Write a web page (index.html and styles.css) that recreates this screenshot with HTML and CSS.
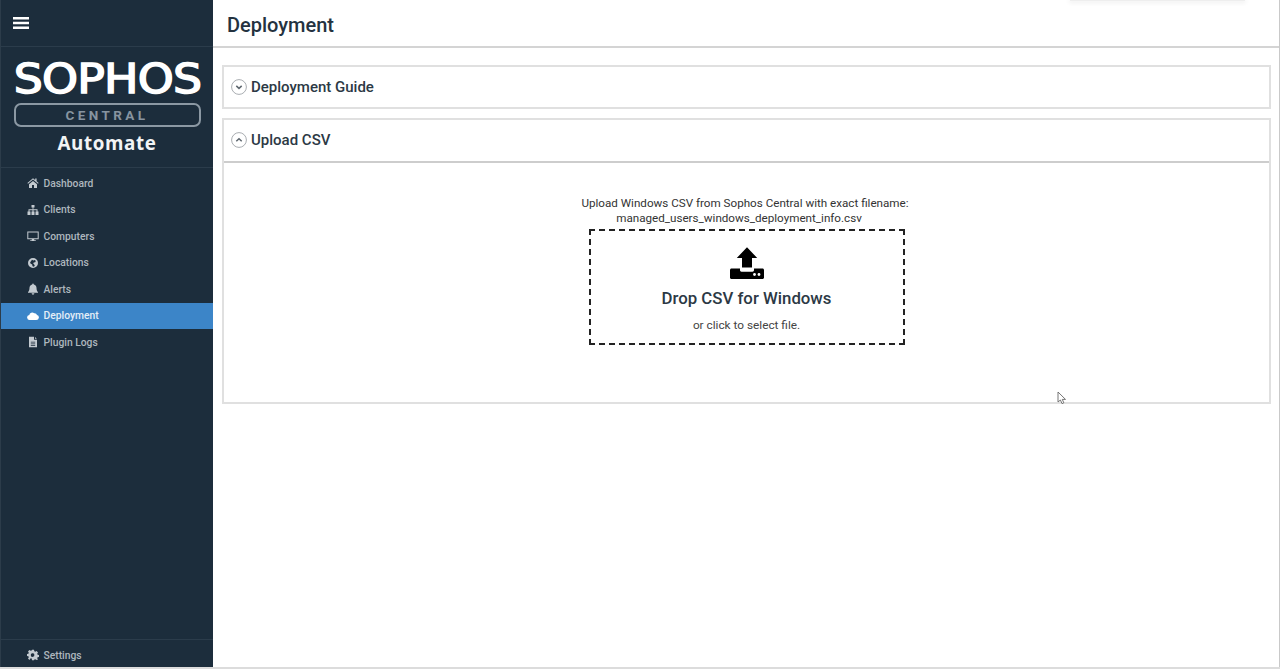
FILE: index.html
```html
<!DOCTYPE html>
<html lang="en">
<head>
<meta charset="utf-8">
<title>Deployment</title>
<link rel="stylesheet" href="styles.css">
</head>
<body>
<div class="app">
  <aside class="sidebar">
    <div class="side-top">
      <svg class="burger" viewBox="0 0 16 14" width="16" height="14"><path d="M0 1h16v2.400H0zM0 5.800h16v2.400H0zM0 10.600h16V13H0z" fill="#fff"/></svg>
    </div>
    <div class="brand">
      <div class="sophos">SOPHOS</div>
      <div class="central">CENTRAL</div>
      <div class="automate">Automate</div>
    </div>
    <nav class="nav">
      <a class="nav-item"><svg class="ico" viewBox="0 0 12 12"><path d="M6 1.200.4 6l.6.7L6 2.600l5 4.100.6-.7-2-1.700V1.600H8.200v1.500zM2 7.200V11h3V8h2v3h3V7.200L6 3.900z"/></svg>Dashboard</a>
      <a class="nav-item"><svg class="ico" viewBox="0 0 12 12"><path d="M4.500 1h3v2.600H6.400v1.600h4.100v2.400H11.500V11h-3V7.600h1V6.200h-3v1.400h1V11h-3V7.600h1V6.200h-3v1.400h1V11h-3V7.600h1V5.200h4.100V3.600H4.500z"/></svg>Clients</a>
      <a class="nav-item"><svg class="ico" viewBox="0 0 12 12"><path d="M.3 1.500h11.400v7.700H7.200v1h1.600V11H3.200v-.8h1.600v-1H.3zm1 1v5.700h9.400V2.500z" fill-rule="evenodd"/></svg>Computers</a>
      <a class="nav-item"><svg class="ico" viewBox="0 0 12 12"><path d="M6 1a5 5 0 1 0 0 10A5 5 0 0 0 6 1zm-1 1.800 1.500.6L7.800 3l1 1-.6 1.200-1.400.2-.6 1.200 1 .8.600 1.400-1 1-1.300-.6-.3-1.600-1.500-.9-.6-1.300 1-1.500z" fill-rule="evenodd"/></svg>Locations</a>
      <a class="nav-item"><svg class="ico" viewBox="0 0 12 12"><path d="M6 .6a.8.800 0 0 1 .8.800c1.700.3 2.700 1.700 2.700 3.300 0 2.500.7 3.500 1.500 4.300v.7h-10V9C1.800 8.200 2.500 7.200 2.500 4.700c0-1.600 1-3 2.700-3.300A.8.800 0 0 1 6 .6zM4.600 10.300h2.800a1.400 1.400 0 0 1-2.800 0z"/></svg>Alerts</a>
      <a class="nav-item active"><svg class="ico" viewBox="0 0 12 12"><path d="M3 10h6.300A2.600 2.600 0 0 0 10 4.900 2.500 2.500 0 0 0 7.200 3.300 3 3 0 0 0 2.300 5 2.500 2.500 0 0 0 3 10z"/></svg>Deployment</a>
      <a class="nav-item"><svg class="ico" viewBox="0 0 12 12"><path d="M2 .7h5v3h3v7.600H2zM8 .9 9.800 2.800H8zM3.800 5.800v.8h4.400v-.8zm0 1.600v.8h4.400v-.8zm0 1.600v.8h4.400V9z" fill-rule="evenodd"/></svg>Plugin Logs</a>
    </nav>
    <div class="side-foot">
      <a class="nav-item"><svg class="ico" viewBox="0 0 12 12"><path d="M5 .8h2l.3 1.500 1 .4L9.600 2 11 3.400l-.8 1.300.4 1 1.500.3v2l-1.500.3-.4 1 .8 1.300L9.600 11l-1.300-.800-1 .4L7 11.200H5l-.3-1.600-1-.4L2.400 11 1 9.600l.8-1.300-.4-1L-.1 7V5l1.500-.3.4-1L1 2.400 2.400 1l1.300.8 1-.4zM6 4.300a1.800 1.800 0 1 0 0 3.500 1.800 1.800 0 0 0 0-3.500z" fill-rule="evenodd"/></svg>Settings</a>
    </div>
  </aside>
  <main class="main">
    <header class="page-head"><h1 class="page-title">Deployment</h1></header>
    <div class="content">
      <section class="panel">
        <div class="panel-head">
          <svg class="chev" viewBox="0 0 16 16"><circle cx="8" cy="8" r="7.400"/><path d="M5.300 6.900 8 9.400l2.700-2.500"/></svg>
          <h2 class="panel-title">Deployment Guide</h2>
        </div>
      </section>
      <section class="panel">
        <div class="panel-head open">
          <svg class="chev" viewBox="0 0 16 16"><circle cx="8" cy="8" r="7.400"/><path d="M5.300 9.200 8 6.700l2.700 2.500"/></svg>
          <h2 class="panel-title">Upload CSV</h2>
        </div>
        <div class="panel-body">
          <p class="hint">Upload Windows CSV from Sophos Central with exact filename:<span class="hint-file">managed_users_windows_deployment_info.csv</span></p>
          <div class="drop">
            <svg class="upload" viewBox="0 0 34 32" width="34" height="32"><path d="M17 .2 27.200 11H22v9.500H12V11H6.800z"/><path d="M1.500 21.500h8.500v1.500c0 1 .7 1.700 1.500 1.700h11c.8 0 1.500-.7 1.500-1.700v-1.500h8.500c.8 0 1.500.7 1.500 1.500v7.500c0 .8-.7 1.500-1.500 1.500h-31C.7 32 0 31.300 0 30.500V23c0-.8.700-1.500 1.500-1.500z"/><circle cx="24.500" cy="27.500" r="1.400" fill="#fff"/><circle cx="29" cy="27.500" r="1.400" fill="#fff"/></svg>
            <div class="drop-title">Drop CSV for Windows</div>
            <div class="drop-sub">or click to select file.</div>
          </div>
        </div>
      </section>
    </div>
  </main>
</div>
<div class="top-shadow"></div>
<svg class="cursor" viewBox="0 0 10 14" width="10" height="14"><path d="M1 1v10l2.400-2 1.600 3.600 1.800-.8L5.300 8.400H8.500z" fill="#fff" stroke="#666" stroke-width=".9"/></svg>
</body>
</html>
```
FILE: styles.css
```css
* { box-sizing: border-box; }
html, body { margin: 0; height: 100%; overflow: hidden; background: #fff; }
body { font-family: Roboto, "Liberation Sans", sans-serif; color: #2a3642; }
.app { display: flex; height: 667px; border-right: 1px solid #c9c9c9; box-shadow: 0 2px 0 #dcdcdc; }

.sidebar { width: 213px; flex: none; display: flex; flex-direction: column; background: #1c2d3c; border-left: 1px solid #2c3c4a; }
.side-top { height: 47px; flex: none; padding: 16px 0 0 12px; border-bottom: 1px solid #2b3c4b; }
.burger { display: block; }

.brand { height: 121px; flex: none; padding-top: 13px; border-bottom: 1px solid #2b3c4b; display: flex; flex-direction: column; align-items: center; }
.sophos { width: 187px; font-family: "DejaVu Sans", sans-serif; font-size: 40.500px; line-height: 38px; color: #fff; text-align: center; white-space: nowrap; letter-spacing: -.7px; -webkit-text-stroke: 1.500px #fff; transform: scaleX(1.13); }
.central { width: 187px; height: 24px; margin-top: 5px; border: 2px solid #8b98a3; border-radius: 7px; font-size: 13.500px; line-height: 20px; font-weight: 700; letter-spacing: 3.400px; text-align: center; color: #8794a0; }
.automate { margin-top: 3px; font-family: "Open Sans", sans-serif; font-size: 18.800px; line-height: 26px; font-weight: 700; letter-spacing: .6px; color: #f2f4f5; }

.nav { flex: 1; padding-top: 2px; }
.nav-item { display: flex; align-items: center; height: 26.500px; padding-left: 25.500px; font-size: 10.300px; font-weight: 500; color: #aeb7be; }
.nav-item.active { background: #3c85c8; color: #e4eef7; }
.nav-item.active .ico { fill: #fff; }
.ico { width: 12px; height: 12px; margin-right: 5px; flex: none; fill: #c3cad0; }
.side-foot { height: 28px; flex: none; padding-top: 2px; border-top: 1px solid #2b3c4b; }

.main { flex: 1; min-width: 0; }
.page-head { height: 48px; padding-left: 14px; border-bottom: 2px solid #d4d4d4; }
.page-title { margin: 0; font-size: 20px; line-height: 50px; font-weight: 500; color: #243240; }
.content { padding: 17px 8px 0 9px; }
.panel { border: 2px solid #e0e0e0; margin-bottom: 9px; }
.panel-head { display: flex; align-items: center; height: 40px; padding-left: 7px; }
.panel-head.open { height: 43px; padding-bottom: 1px; border-bottom: 2px solid #cdcdcd; }
.chev { width: 16px; height: 16px; margin-right: 4px; flex: none; fill: none; stroke: #a9adb1; stroke-width: 1; }
.chev path { stroke: #5d666e; stroke-width: 1.500; }
.panel-title { margin: 0; font-size: 15px; font-weight: 500; color: #2c3945; }
.panel-body { height: 239px; padding-top: 33px; display: flex; flex-direction: column; align-items: center; }
.hint { margin: 0 3px 0 0; font-size: 11.650px; line-height: 14.500px; text-align: center; color: #333; }
.hint-file { display: block; padding-right: 12px; }
.drop { width: 316px; height: 116px; margin-top: 4px; border: 2px dashed #222; display: flex; flex-direction: column; align-items: center; padding-top: 16px; }
.upload { display: block; fill: #000; }
.drop-title { margin-top: 9px; font-size: 16.800px; line-height: 20px; font-weight: 500; color: #2c3945; }
.drop-sub { margin-top: 10px; font-size: 11.800px; line-height: 14px; color: #444; }

.top-shadow { position: absolute; left: 1070px; top: 0; width: 175px; height: 1px; background: #eee; box-shadow: 0 1px 4px 1px #eee; }
.cursor { position: absolute; left: 1057px; top: 391px; }
```
